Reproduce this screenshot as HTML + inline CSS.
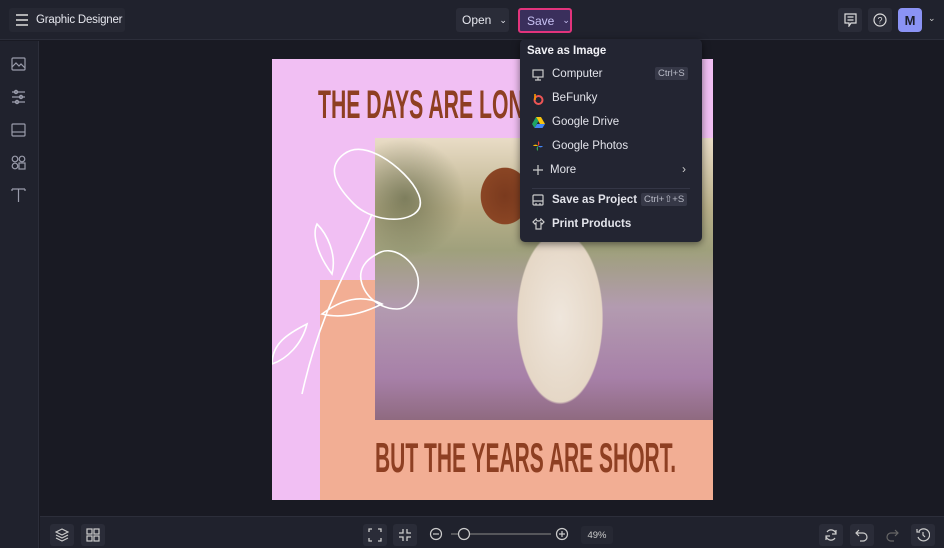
<!DOCTYPE html>
<html><head><style>
*{margin:0;padding:0;box-sizing:border-box}
body{width:944px;height:548px;background:#191a23;font-family:"Liberation Sans",sans-serif;position:relative;overflow:hidden;color:#e6e7ee}
.top{position:absolute;left:0;top:0;width:944px;height:40px;background:#20222d;border-bottom:1px solid #2c2e3a}
.side{position:absolute;left:0;top:41px;width:39px;height:507px;background:#20222d;border-right:1px solid #2c2e3a}
.bot{position:absolute;left:40px;top:516px;width:904px;height:32px;background:#20222d;border-top:1px solid #2c2e3a}
.btn{position:absolute;background:#2a2c38;border-radius:3px;font-size:12px;color:#e6e7ee;display:flex;align-items:center;white-space:nowrap}
.ab{position:absolute}
.menu{position:absolute;left:520px;top:39px;width:182px;height:203px;background:#232532;border-radius:5px;box-shadow:0 2px 8px rgba(0,0,0,.5);font-size:11.5px}
.mi{position:absolute;left:32px;color:#e2e3ea}
.kbd{position:absolute;background:#363847;border-radius:2px;font-size:9.5px;color:#b8bac6;padding:1px 3px}
.ic{position:absolute;left:12px}
.t{font-family:"Liberation Sans Narrow","Liberation Sans",sans-serif;font-weight:bold;color:#8e3f22;position:absolute;white-space:nowrap;transform-origin:0 0}
</style></head><body>
<div class="top"></div>
<div class="btn" style="left:9px;top:8px;width:116px;height:24px;background:#262833">
<svg class="ab" style="left:6px;top:6px" width="14" height="12"><path d="M1 1h12M1 6h12M1 11h12" stroke="#ddd" stroke-width="1.4"/></svg>
<span style="position:absolute;left:27px;font-size:11.5px;letter-spacing:-0.2px">Graphic Designer</span></div>
<div class="btn" style="left:456px;top:8px;width:53px;height:24px;"><span style="margin-left:6px">Open</span><span style="margin-left:8px;font-size:9px">⌄</span></div>
<div class="btn" style="left:518px;top:8px;width:54px;height:25px;background:#3a2f5c;border:2px solid #e2347c;color:#c9c3f5"><span style="margin-left:7px">Save</span><span style="margin-left:8px;font-size:9px">⌄</span></div>
<div class="btn" style="left:838px;top:8px;width:24px;height:24px"><svg class="ab" style="left:6px;top:5px" width="13" height="14"><path d="M1 1h11v9H7l-2 3v-3H1z M3.5 4h6M3.5 7h6" stroke="#ddd" fill="none" stroke-width="1.2"/></svg></div>
<div class="btn" style="left:868px;top:8px;width:24px;height:24px"><svg class="ab" style="left:5px;top:5px" width="14" height="14"><circle cx="7" cy="7" r="6" stroke="#ddd" fill="none" stroke-width="1.2"/><text x="4.5" y="10.5" font-size="9" fill="#ddd" font-family="Liberation Sans">?</text></svg></div>
<div class="btn" style="left:898px;top:8px;width:24px;height:24px;background:#8b93f5;border-radius:4px;justify-content:center;color:#1c1e2a;font-size:13px;font-weight:bold">M</div>
<span class="ab" style="left:928px;top:13px;font-size:9px;color:#ccc">⌄</span>
<div class="side">
<svg class="ab" style="left:11px;top:16px" width="16" height="150" fill="none" stroke="#9a9cab" stroke-width="1.2">
<rect x="1" y="1" width="13" height="12" rx="1"/><path d="M1 10l4-4 3 3 2-2 4 4"/>
<path d="M1 35h13M1 40h13M1 45h13"/><circle cx="5" cy="35" r="1.6"/><circle cx="10" cy="40" r="1.6"/><circle cx="6" cy="45" r="1.6"/>
<rect x="1" y="67" width="13" height="12" rx="1"/><path d="M1 75h13"/>
<circle cx="4" cy="102" r="2.8"/><circle cx="11" cy="102" r="2.8"/><circle cx="4" cy="109" r="2.8"/><rect x="8" y="106" width="6" height="6"/>
<path d="M1 132h13M7.5 132v13M1 132v2M14 132v2"/>
</svg></div>
<div class="bot">
<div class="btn" style="left:10px;top:7px;width:24px;height:22px"><svg class="ab" style="left:5px;top:4px" width="14" height="14" fill="none" stroke="#ccc" stroke-width="1.2"><path d="M7 1l6 3-6 3-6-3z M1 7l6 3 6-3 M1 10l6 3 6-3"/></svg></div>
<div class="btn" style="left:41px;top:7px;width:24px;height:22px"><svg class="ab" style="left:5px;top:4px" width="14" height="14" fill="none" stroke="#ccc" stroke-width="1.2"><rect x="1" y="1" width="5" height="5"/><rect x="8" y="1" width="5" height="5"/><rect x="1" y="8" width="5" height="5"/><rect x="8" y="8" width="5" height="5"/></svg></div>
<div class="btn" style="left:323px;top:7px;width:24px;height:22px"><svg class="ab" style="left:5px;top:4px" width="14" height="14" fill="none" stroke="#ccc" stroke-width="1.3"><path d="M1 4V1h3M10 1h3v3M13 10v3h-3M4 13H1v-3"/></svg></div>
<div class="btn" style="left:353px;top:7px;width:24px;height:22px"><svg class="ab" style="left:5px;top:4px" width="14" height="14" fill="none" stroke="#ccc" stroke-width="1.3"><path d="M1 5h4V1M13 5H9V1M1 9h4v4M13 9H9v4"/></svg></div>
<svg class="ab" style="left:389px;top:10px" width="140" height="14" fill="none" stroke="#ccc" stroke-width="1.2"><circle cx="7" cy="7" r="5.5"/><path d="M4 7h6"/><path d="M22 7h100" stroke="#777"/><circle cx="35" cy="7" r="5.5" fill="#20222d"/><circle cx="133" cy="7" r="5.5"/><path d="M130 7h6M133 4v6"/></svg>
<div class="btn" style="left:541px;top:9px;width:32px;height:18px;background:#262833;font-size:9.5px;justify-content:center;color:#ccc">49%</div>
<div class="btn" style="left:779px;top:7px;width:24px;height:22px"><svg class="ab" style="left:5px;top:4px" width="14" height="14" fill="none" stroke="#ccc" stroke-width="1.2"><path d="M3 4a5 5 0 0 1 9 2M11 10a5 5 0 0 1-9-2M12 2v4H8M2 12V8h4"/></svg></div>
<div class="btn" style="left:810px;top:7px;width:24px;height:22px"><svg class="ab" style="left:5px;top:4px" width="14" height="14" fill="none" stroke="#ccc" stroke-width="1.2"><path d="M4 2L1 5l3 3M1 5h7a4 4 0 0 1 0 8H5"/></svg></div>
<div class="btn" style="left:840px;top:7px;width:24px;height:22px;background:transparent"><svg class="ab" style="left:5px;top:4px" width="14" height="14" fill="none" stroke="#666" stroke-width="1.2"><path d="M10 2l3 3-3 3M13 5H6a4 4 0 0 0 0 8h3"/></svg></div>
<div class="btn" style="left:871px;top:7px;width:24px;height:22px"><svg class="ab" style="left:5px;top:4px" width="14" height="14" fill="none" stroke="#ccc" stroke-width="1.2"><path d="M3 3a6 6 0 1 1-1 6M1 1v3h3M7 4v3l2 2"/></svg></div>
</div>
<!-- design -->
<div class="ab" style="left:272px;top:59px;width:441px;height:441px;background:#f1bff3;overflow:hidden">
<div class="ab" style="left:48px;top:221px;width:393px;height:220px;background:#f2ae94"></div>
<div class="ab" style="left:103px;top:79px;width:338px;height:282px;background:linear-gradient(180deg,#e9dcc6 0%,#b9b08a 25%,#9fa07c 40%,#b39bb0 60%,#a780a8 85%,#8f6a80 100%)"></div>
<div class="ab" style="left:103px;top:79px;width:338px;height:282px;background:radial-gradient(ellipse 60px 120px at 185px 180px,#efe6dc 0%,#e5d7c6 70%,transparent 72%),radial-gradient(ellipse 30px 35px at 130px 58px,#7a3a1e 0%,#8a4524 80%,transparent 82%),radial-gradient(ellipse 60px 60px at 30px 60px,rgba(60,70,40,.5),transparent)"></div>
<div class="t" style="left:46px;top:24px;font-size:40px;transform:scaleX(.53)">THE DAYS ARE LONG</div>
<div class="t" style="left:103px;top:375px;font-size:42px;transform:scaleX(.5)">BUT THE YEARS ARE SHORT.</div>
<svg class="ab" style="left:0;top:85px" width="170" height="260" fill="none" stroke="#fff" stroke-width="1.6"><path d="M100 70C80 120 50 160 30 250M72 10c20-15 50 10 60 20s25 30 10 40-45 5-60-10-30-35-10-50z M105 110c15-10 35 5 40 20s-5 35-20 35-30-10-35-25 5-25 15-30z M60 130c-15-20-20-40-15-50 10 10 20 30 15 50z M35 180c-20 10-35 20-35 40 15-5 30-20 35-40z M50 170c20-15 40-20 60-10-20 10-40 15-60 10z"/></svg>
</div>
<!-- menu -->
<div class="menu">
<div class="ab" style="left:7px;top:6px;font-size:11.5px;font-weight:bold;color:#f0f0f5">Save as Image</div>
<svg class="ic" style="top:30px" width="12" height="12" fill="none" stroke="#ccc" stroke-width="1.2"><rect x="1" y="1" width="10" height="7"/><path d="M6 8v3M3 11h6"/></svg>
<div class="mi" style="top:29px">Computer</div><div class="kbd" style="left:135px;top:28px">Ctrl+S</div>
<svg class="ic" style="top:54px" width="12" height="12"><circle cx="6.5" cy="7" r="4" fill="none" stroke="#e55" stroke-width="2"/><path d="M3 1v6" stroke="#f90" stroke-width="1.6"/></svg>
<div class="mi" style="top:53px">BeFunky</div>
<svg class="ic" style="top:77px" width="13" height="12"><path d="M4 1h5l4 7H8z" fill="#f8c30f"/><path d="M4 1L0 8l2.5 4L6.5 5z" fill="#1fa463"/><path d="M2.5 12h8L13 8H5z" fill="#4285f4"/></svg>
<div class="mi" style="top:77px">Google Drive</div>
<svg class="ic" style="top:101px" width="12" height="12"><path d="M6 6V1a3 3 0 0 1 0 5z" fill="#ea4335"/><path d="M6 6h5a3 3 0 0 1-5 0z" fill="#4285f4"/><path d="M6 6v5a3 3 0 0 1 0-5z" fill="#34a853"/><path d="M6 6H1a3 3 0 0 1 5 0z" fill="#fbbc05"/></svg>
<div class="mi" style="top:101px">Google Photos</div>
<svg class="ic" style="top:125px" width="12" height="12" stroke="#ccc" stroke-width="1.2"><path d="M6 1v10M1 6h10"/></svg>
<div class="mi" style="top:125px;left:30px">More</div><div class="ab" style="left:162px;top:123px;color:#ccc;font-size:12px">›</div>
<div class="ab" style="left:12px;top:149px;width:158px;height:1px;background:#343646"></div>
<svg class="ic" style="top:155px" width="12" height="12" fill="none" stroke="#ccc" stroke-width="1.2"><rect x="1" y="1" width="10" height="10" rx="1"/><path d="M1 7h10M4 11v-2M8 11v-2"/></svg>
<div class="mi" style="top:155px;font-weight:bold">Save as Project</div><div class="kbd" style="left:121px;top:154px">Ctrl+⇧+S</div>
<svg class="ic" style="top:179px" width="13" height="12" fill="none" stroke="#ccc" stroke-width="1.2"><path d="M4 1L1 4l2 2 1-1v6h5V5l1 1 2-2-3-3c0 1-1 2-2.5 2S4 2 4 1z"/></svg>
<div class="mi" style="top:179px;font-weight:bold">Print Products</div>
</div>
</body></html>
